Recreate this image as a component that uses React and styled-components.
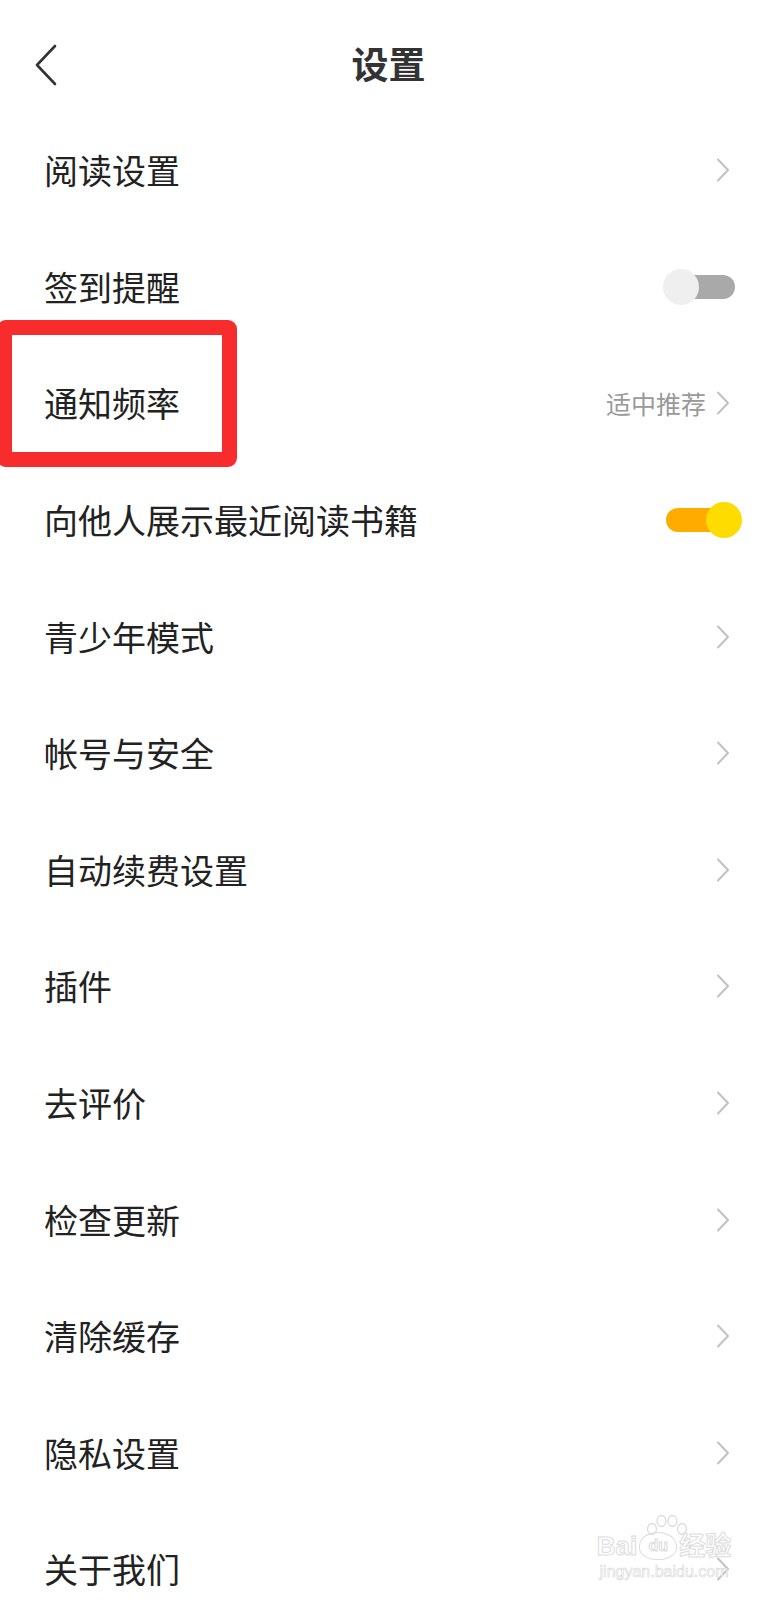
import React from 'react';
import styled, { createGlobalStyle } from 'styled-components';

const items = [
  { label: '阅读设置', kind: 'link' },
  { label: '签到提醒', kind: 'toggle', on: false },
  { label: '通知频率', kind: 'link', value: '适中推荐', marked: true },
  { label: '向他人展示最近阅读书籍', kind: 'toggle', on: true },
  { label: '青少年模式', kind: 'link' },
  { label: '帐号与安全', kind: 'link' },
  { label: '自动续费设置', kind: 'link' },
  { label: '插件', kind: 'link' },
  { label: '去评价', kind: 'link' },
  { label: '检查更新', kind: 'link' },
  { label: '清除缓存', kind: 'link' },
  { label: '隐私设置', kind: 'link' },
  { label: '关于我们', kind: 'link' },
];

const Chevron = () => (
  <ChevronSvg viewBox="0 0 14 24" width="14" height="24">
    <path d="M2 1.5 L12 12 L2 22.5" fill="none" stroke="#c2c2c2" strokeWidth="2" strokeLinecap="round" strokeLinejoin="round" />
  </ChevronSvg>
);

const Paw = () => (
  <svg width="42" height="22" viewBox="0 0 42 22">
    <g fill="none" stroke="#dcdcdc" strokeWidth="1.3">
      <ellipse cx="6" cy="15" rx="4.5" ry="5.5" />
      <ellipse cx="15.5" cy="7" rx="4.5" ry="5.5" />
      <ellipse cx="26.5" cy="7" rx="4.5" ry="5.5" />
      <ellipse cx="36" cy="15" rx="4.5" ry="5.5" />
    </g>
  </svg>
);

const App = () => (
  <>
    <GlobalStyle />
    <Page>
      <Header>
        <BackButton>
          <svg width="24" height="42" viewBox="0 0 24 42">
            <path d="M21 2 L3 21 L21 40" fill="none" stroke="#333" strokeWidth="2.6" strokeLinecap="round" strokeLinejoin="round" />
          </svg>
        </BackButton>
        <Title>设置</Title>
      </Header>
      <List>
        {items.map((item) => (
          <Row key={item.label}>
            <Label>{item.label}</Label>
            {item.kind === 'toggle' ? (
              <Toggle $on={item.on}>
                <Knob $on={item.on} />
              </Toggle>
            ) : (
              <Right>
                {item.value && <Value>{item.value}</Value>}
                <Chevron />
              </Right>
            )}
            {item.marked && <Highlight />}
          </Row>
        ))}
      </List>
      <Watermark>
        <PawWrap>
          <Paw />
        </PawWrap>
        <MarkLine>
          Bai<Pad>du</Pad>经验
        </MarkLine>
        <MarkSmall>jingyan.baidu.com</MarkSmall>
      </Watermark>
    </Page>
  </>
);

export default App;

const GlobalStyle = createGlobalStyle`
  html, body {
    margin: 0;
    padding: 0;
    background: #fff;
  }
  body {
    font-family: "Noto Sans CJK SC", "Noto Sans", sans-serif;
  }
`;

const Page = styled.div`
  position: relative;
  width: 777px;
  height: 1600px;
  overflow: hidden;
  background: #fff;
`;

const Header = styled.div`
  box-sizing: border-box;
  height: 112px;
  padding-top: 14px;
  display: flex;
  align-items: center;
  justify-content: center;
  position: relative;
`;

const BackButton = styled.div`
  position: absolute;
  left: 34px;
  top: 44px;
  display: flex;
`;

const Title = styled.h1`
  margin: 0;
  font-size: 37px;
  font-weight: 700;
  color: #333;
  line-height: 1;
`;

const List = styled.div`
  display: flex;
  flex-direction: column;
`;

const Row = styled.div`
  position: relative;
  height: 116.6px;
  display: flex;
  align-items: center;
  justify-content: space-between;
  padding: 0 47px 0 44px;
`;

const Label = styled.span`
  font-size: 34px;
  color: #222;
  line-height: 1;
`;

const Right = styled.div`
  display: flex;
  align-items: center;
  gap: 10px;
`;

const Value = styled.span`
  font-size: 25px;
  color: #999;
  line-height: 1;
`;

const ChevronSvg = styled.svg`
  display: block;
`;

const Toggle = styled.div`
  position: relative;
  width: ${(p) => (p.$on ? '64px' : '62px')};
  height: 24px;
  border-radius: 12px;
  background: ${(p) => (p.$on ? '#ffab00' : '#a9a9a9')};
  margin-right: ${(p) => (p.$on ? '0' : '-5px')};
`;

const Knob = styled.div`
  position: absolute;
  top: -6px;
  width: 36px;
  height: 36px;
  border-radius: 50%;
  background: ${(p) => (p.$on ? '#ffdc00' : '#efefef')};
  ${(p) => (p.$on ? 'right: -12px;' : 'left: -10px;')}
`;

const Highlight = styled.div`
  position: absolute;
  left: -3px;
  top: -25px;
  width: 240px;
  height: 147px;
  box-sizing: border-box;
  border: 15px solid #f82b2d;
  border-radius: 9px;
  pointer-events: none;
`;

const Watermark = styled.div`
  position: absolute;
  left: 592px;
  top: 1514px;
  width: 144px;
  display: flex;
  flex-direction: column;
  align-items: center;
  font-family: "Liberation Sans", "Noto Sans CJK SC", sans-serif;
  white-space: nowrap;
  pointer-events: none;
`;

const PawWrap = styled.div`
  margin-bottom: -4px;
  margin-left: 6px;
  display: flex;
`;

const MarkLine = styled.div`
  display: flex;
  align-items: center;
  gap: 2px;
  font-size: 26px;
  font-weight: 700;
  line-height: 1;
  color: rgba(255, 255, 255, 0.6);
  -webkit-text-stroke: 1px #dcdcdc;
`;

const Pad = styled.span`
  display: inline-flex;
  align-items: center;
  justify-content: center;
  width: 36px;
  height: 26px;
  border: 1.3px solid #dcdcdc;
  border-radius: 50% 50% 45% 45%;
  font-size: 16px;
`;

const MarkSmall = styled.div`
  margin-top: 4px;
  font-size: 16px;
  line-height: 1;
  color: rgba(255, 255, 255, 0.6);
  -webkit-text-stroke: 0.7px #dcdcdc;
`;
